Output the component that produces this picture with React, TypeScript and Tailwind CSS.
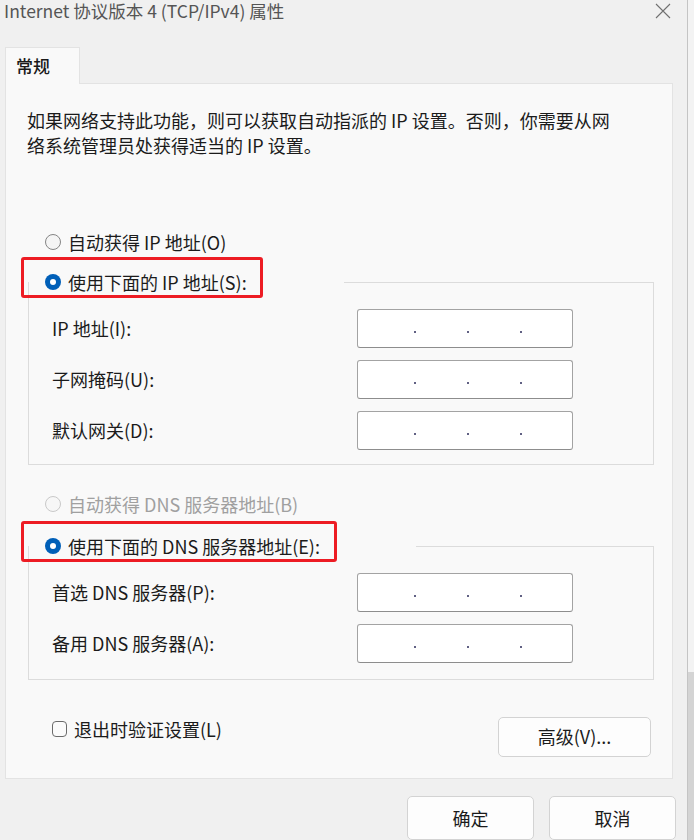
import type { ReactNode } from 'react';

const font = "font-['Noto_Sans_CJK_SC','Noto_Sans',sans-serif]";

function Radio({ checked, disabled }: { checked?: boolean; disabled?: boolean }) {
  if (checked) {
    return (
      <span className="flex h-4 w-4 shrink-0 items-center justify-center rounded-full bg-[#005fb8]">
        <span className="h-[6px] w-[6px] rounded-full bg-white" />
      </span>
    );
  }
  return (
    <span
      className={
        disabled
          ? 'h-4 w-4 shrink-0 rounded-full border border-[#c9c9c9] bg-[#f7f7f7]'
          : 'h-4 w-4 shrink-0 rounded-full border border-[#858585] bg-[#f5f5f5]'
      }
    />
  );
}

function IpInput() {
  return (
    <div className="flex h-[39px] w-[216px] items-center rounded-[3px] border border-[#a3a3a3] border-b-[#8d8d8d] bg-white pl-[56px]">
      <div className="mt-[7px] flex gap-[51px]">
        <span className="h-[2px] w-[2px] rounded-full bg-[#2d2d5a]" />
        <span className="h-[2px] w-[2px] rounded-full bg-[#2d2d5a]" />
        <span className="h-[2px] w-[2px] rounded-full bg-[#2d2d5a]" />
      </div>
    </div>
  );
}

function Field({ label }: { label: string }) {
  return (
    <div className="flex items-center pl-[23px]">
      <span className="w-[305px] text-[18px] leading-[24px] text-[#1b1b1b]">{label}</span>
      <IpInput />
    </div>
  );
}

function GroupBox({ legend, legendWidth, boxWidth, children }: { legend: string; legendWidth: string; boxWidth: string; children: ReactNode }) {
  return (
    <div className="relative ml-[22px] w-[626px] border border-[#dcdcdc]">
      <div className={`absolute -top-[13px] left-0 flex h-[24px] items-center gap-[7px] bg-[#f9f9f9] pl-[16px] ${legendWidth}`}>
        <Radio checked />
        <span className="text-[18px] leading-[24px] text-[#1b1b1b]">{legend}</span>
      </div>
      <div className={`pointer-events-none absolute -top-[26px] -left-[8px] h-[41px] rounded-[3px] border-[3px] border-[#ed1c24] ${boxWidth}`} />
      {children}
    </div>
  );
}

function Button({ children, className }: { children: ReactNode; className: string }) {
  return (
    <div className={`flex items-center justify-center rounded-[5px] border border-[#d3d3d3] bg-[#fdfdfd] text-[18px] text-[#1b1b1b] ${className}`}>
      {children}
    </div>
  );
}

export default function App() {
  return (
    <div className={`flex h-[840px] w-[694px] overflow-hidden ${font}`}>
      <div className="flex h-full w-[687px] flex-col bg-[#f0f0f0]">
        <header className="flex h-[47px] items-start justify-between">
          <span className="pl-[4px] text-[17.5px] leading-[22px] text-[#555555]">Internet 协议版本 4 (TCP/IPv4) 属性</span>
          <svg width="16" height="16" viewBox="0 0 16 16" className="mt-[3px] mr-[16px]">
            <path d="M1 1 L15 15 M15 1 L1 15" stroke="#707070" strokeWidth="1.1" fill="none" />
          </svg>
        </header>

        <div className="relative z-10 -mb-px ml-[5px] flex h-[37px] w-[75px] items-center border border-b-0 border-[#e3e3e3] bg-[#f9f9f9] pl-[10px]">
          <span className="text-[17px] font-medium leading-[24px] text-[#1a1a1a]">常规</span>
        </div>

        <section className="ml-[5px] flex h-[700px] w-[668px] flex-col border border-[#e3e3e3] bg-[#f9f9f9]">
          <p className="mt-[24px] w-[615px] pl-[21px] text-[18px] leading-[25px] text-[#1b1b1b]">
            如果网络支持此功能，则可以获取自动指派的 IP 设置。否则，你需要从网络系统管理员处获得适当的 IP 设置。
          </p>

          <div className="mt-[72px] flex h-[24px] items-center gap-[7px] pl-[39px]">
            <Radio />
            <span className="text-[18px] leading-[24px] text-[#1b1b1b]">自动获得 IP 地址(O)</span>
          </div>

          <div className="mt-[28px]">
            <GroupBox legend="使用下面的 IP 地址(S):" legendWidth="w-[315px]" boxWidth="w-[242px]">
              <div className="flex flex-col gap-[12px] pt-[26px] pb-[14px]">
                <Field label="IP 地址(I):" />
                <Field label="子网掩码(U):" />
                <Field label="默认网关(D):" />
              </div>
            </GroupBox>
          </div>

          <div className="mt-[27px] flex h-[24px] items-center gap-[7px] pl-[39px]">
            <Radio disabled />
            <span className="text-[18px] leading-[24px] text-[#a0a0a0]">自动获得 DNS 服务器地址(B)</span>
          </div>

          <div className="mt-[30px]">
            <GroupBox legend="使用下面的 DNS 服务器地址(E):" legendWidth="w-[387px]" boxWidth="w-[316px]">
              <div className="flex flex-col gap-[12px] pt-[26px] pb-[16px]">
                <Field label="首选 DNS 服务器(P):" />
                <Field label="备用 DNS 服务器(A):" />
              </div>
            </GroupBox>
          </div>

          <div className="mt-[37px] flex items-start justify-between pr-[21px] pl-[46px]">
            <label className="flex h-[24px] items-center gap-[7px]">
              <span className="h-[16px] w-[15px] rounded-[4px] border border-[#6b6b6b] bg-[#fbfbfb]" />
              <span className="text-[18px] leading-[24px] text-[#1b1b1b]">退出时验证设置(L)</span>
            </label>
            <Button className="h-[40px] w-[153px]">高级(V)...</Button>
          </div>
        </section>

        <div className="mt-[17px] flex justify-end gap-[15px] pr-[11px]">
          <Button className="h-[44px] w-[127px]">确定</Button>
          <Button className="h-[44px] w-[127px]">取消</Button>
        </div>
      </div>
      <div className="h-full w-px bg-[#c4c4c4]" />
      <div className="flex h-full w-[6px] flex-col">
        <div className="h-[672px] bg-[#f3f3f3]" />
        <div className="flex-1 bg-[#d4d4d4]" />
      </div>
    </div>
  );
}
